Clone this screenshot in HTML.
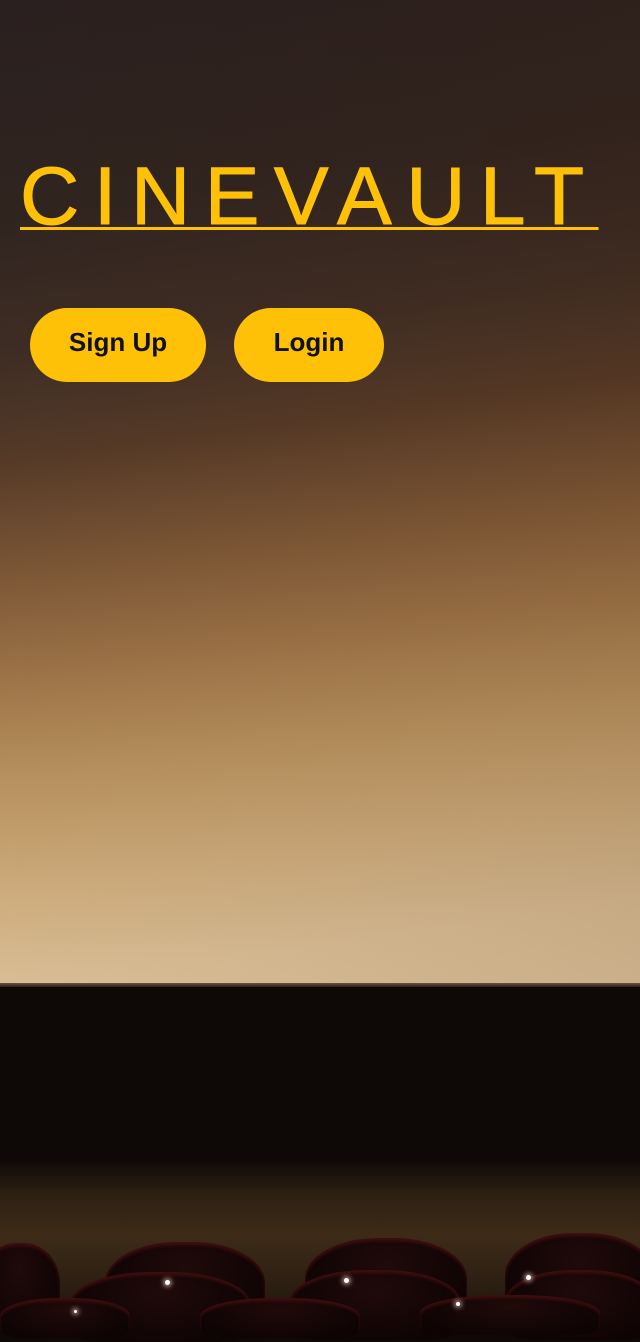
<!DOCTYPE html>
<html><head><meta charset="utf-8"><style>
html,body{margin:0;padding:0;}
body{width:640px;height:1326px;position:relative;overflow:hidden;background:#0e0906;font-family:"Liberation Sans",sans-serif;}
.screen{position:absolute;left:0;top:0;width:640px;height:985px;
background:
linear-gradient(to right, rgba(0,0,0,0) 0%, rgba(60,25,5,0.12) 100%),
linear-gradient(172deg,#2a201f 0%,#30241f 20%,#3e2d24 33%,#553a27 43%,#7a5535 53%,#9c7347 63%,#b8925f 73%,#cdab7c 83%,#d9be95 92%,#ddc49d 100%);}
.edge{position:absolute;left:0;top:983px;width:640px;height:5px;background:linear-gradient(#6a5440,#1a120c);}
.dark{position:absolute;left:0;top:987px;width:640px;height:190px;background:#0e0906;}
.floor{position:absolute;left:0;top:1160px;width:640px;height:166px;background:linear-gradient(#0e0906 0%,#2c1f12 20%,#3d2b17 45%,#2c1f12 75%,#1a120a 100%);}
.seat{position:absolute;border-radius:45% 45% 20% 20%;background:radial-gradient(ellipse at 50% 30%,#200a0a 0%,#120505 60%,#0a0303 100%);box-shadow:inset 0 3px 3px rgba(110,25,25,0.45);}
.hl{position:absolute;width:5px;height:5px;border-radius:50%;background:#fff;box-shadow:0 0 5px 2px rgba(255,220,200,0.6);}
h1{position:absolute;left:20px;top:152px;margin:0;font-size:82px;font-weight:normal;color:#FFC107;-webkit-text-stroke:1px #FFC107;letter-spacing:14.5px;text-decoration:underline;text-decoration-thickness:3px;text-underline-offset:3px;line-height:1.1;white-space:nowrap;}
.btn{position:absolute;top:308px;height:74px;box-sizing:border-box;padding-bottom:5px;border-radius:37px;background:#FFC107;color:#111;font-weight:bold;font-size:26px;display:flex;align-items:center;justify-content:center;}
</style></head><body>
<div class="screen"></div>
<div class="edge"></div>
<div class="dark"></div>
<div class="floor"></div>
<div class="seat" style="left:-20px;top:1243px;width:80px;height:90px"></div>
<div class="seat" style="left:105px;top:1242px;width:160px;height:90px"></div>
<div class="seat" style="left:305px;top:1238px;width:162px;height:90px"></div>
<div class="seat" style="left:505px;top:1233px;width:150px;height:95px"></div>
<div class="seat" style="left:70px;top:1272px;width:180px;height:70px"></div>
<div class="seat" style="left:290px;top:1270px;width:170px;height:70px"></div>
<div class="seat" style="left:505px;top:1270px;width:150px;height:70px"></div>
<div class="seat" style="left:0px;top:1298px;width:130px;height:40px"></div>
<div class="seat" style="left:200px;top:1298px;width:160px;height:40px"></div>
<div class="seat" style="left:420px;top:1295px;width:180px;height:40px"></div>
<div class="hl" style="left:165px;top:1280px"></div>
<div class="hl" style="left:344px;top:1278px"></div>
<div class="hl" style="left:526px;top:1275px"></div>
<div class="hl" style="left:456px;top:1302px;width:4px;height:4px"></div>
<div class="hl" style="left:74px;top:1310px;width:3px;height:3px"></div>
<h1>CINEVAULT</h1>
<div class="btn" style="left:30px;width:176px">Sign Up</div>
<div class="btn" style="left:234px;width:150px">Login</div>
</body></html>
